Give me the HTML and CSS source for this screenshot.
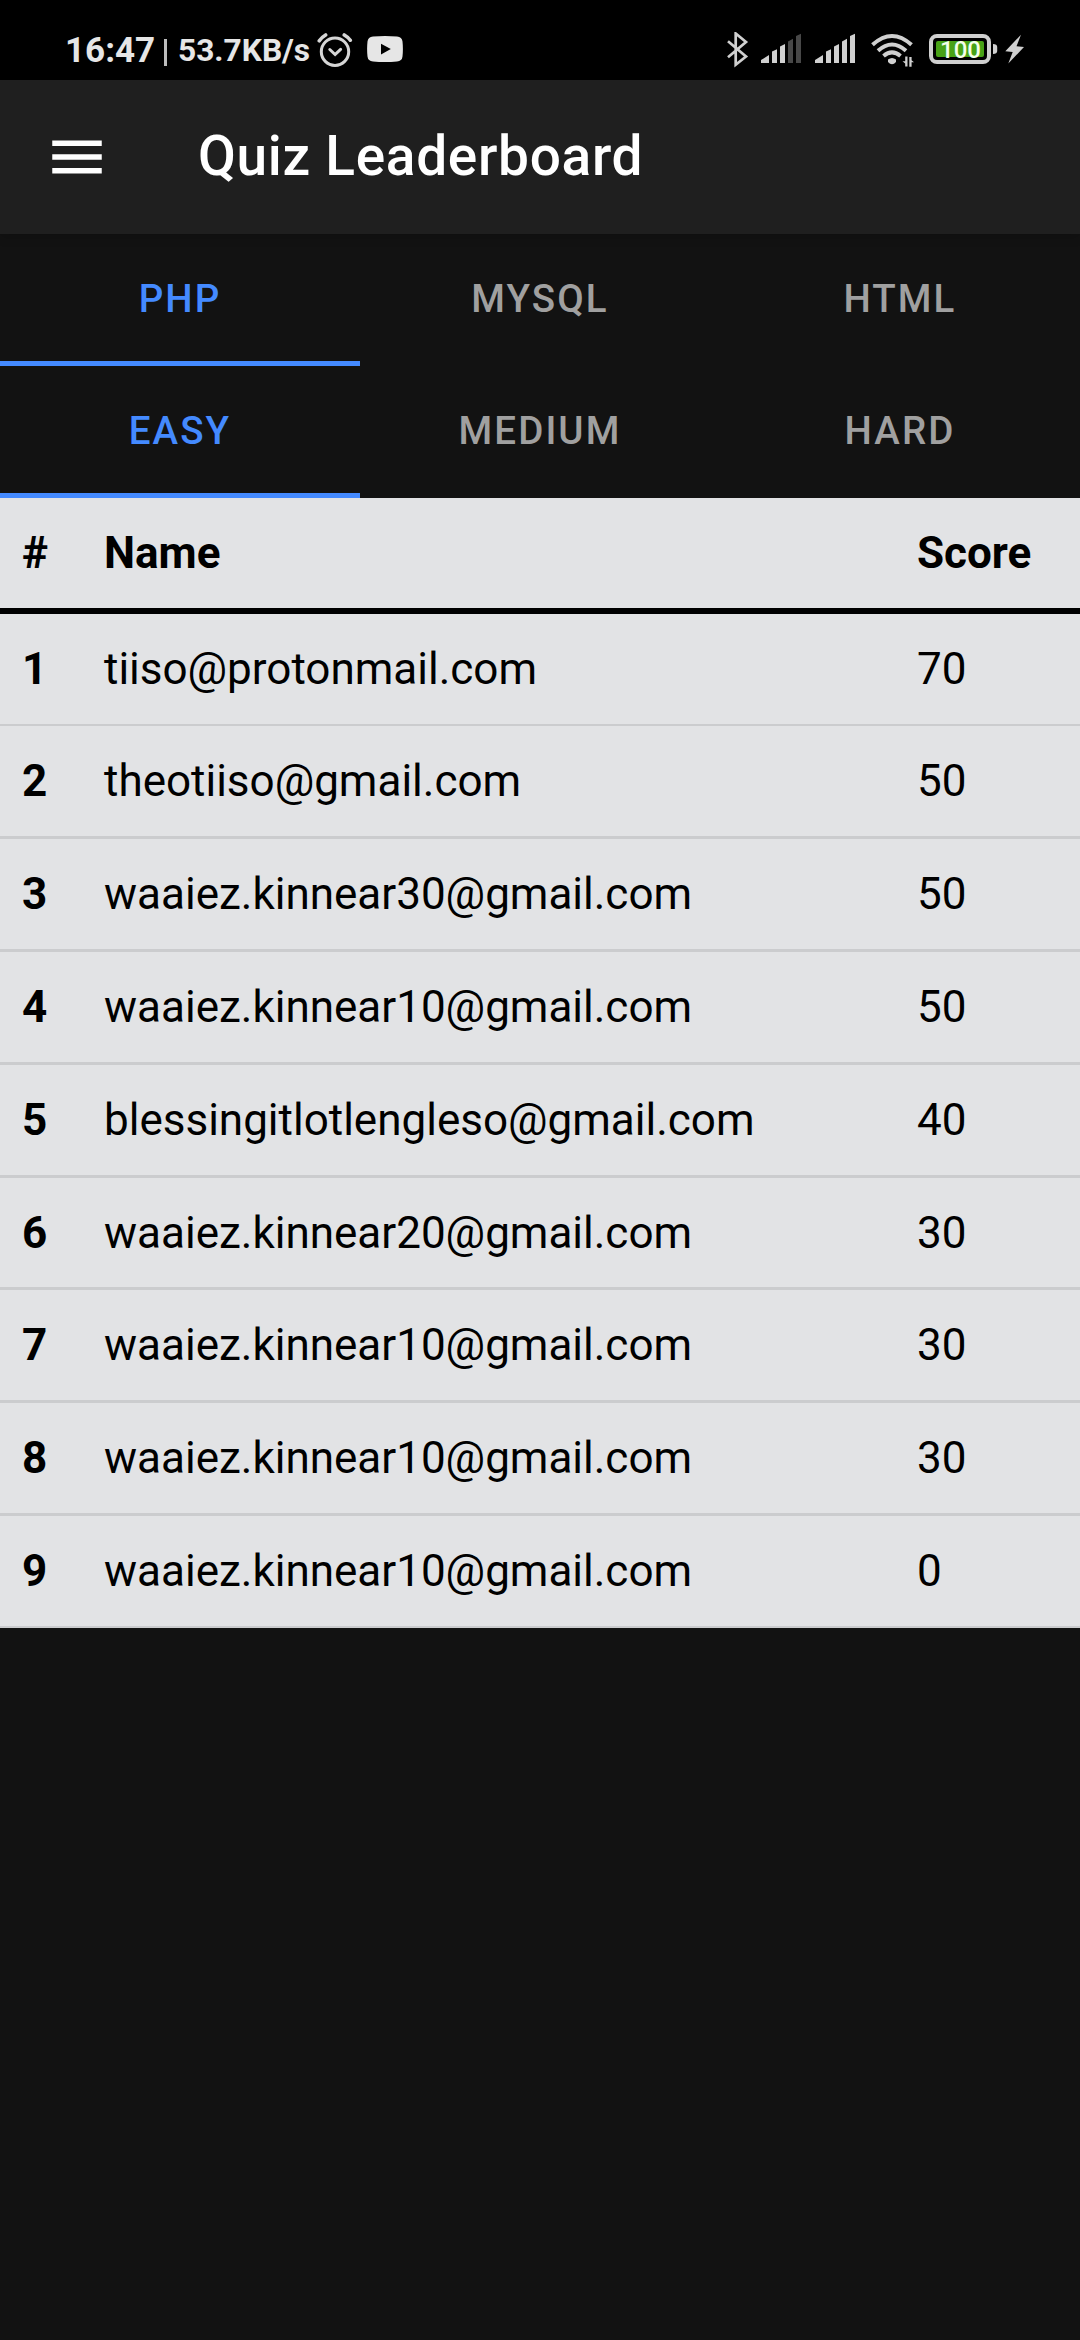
FILE: index.html
```html
<!DOCTYPE html>
<html lang="en">
<head>
<meta charset="utf-8">
<title>Quiz Leaderboard</title>
<link rel="stylesheet" href="styles.css">
</head>
<body>
<div class="status">
  <span class="clock">16:47</span>
  <span class="divider"></span>
  <span class="speed">53.7KB/s</span>
  <svg class="alarm" width="36" height="36" viewBox="317 32 36 36" fill="none" stroke="#d6d6d6" stroke-width="3" stroke-linecap="round">
    <circle cx="335" cy="51.7" r="13.7"/>
    <path d="M329.800 49.500l5.300 5 5.500-5.200"/>
    <path d="M319.300 40.800q2.500-3.600 6.300-5.800M344.300 35q3.800 2.200 6 5.200" stroke-width="3.600"/>
  </svg>
  <svg class="video" width="36" height="26" viewBox="0 0 36 26">
    <path fill="#e6e6e6" fill-rule="evenodd" d="M6 .5Q18-.5 30 .5q5 .3 5.500 5 .8 7.500 0 15-.5 4.700-5.500 5Q18 26.500 6 25.500q-5-.3-5.500-5-.8-7.500 0-15Q1 .8 6 .5zM14 7.800v10.600l9.800-5.300z"/>
  </svg>
  <svg class="phone-state" width="300" height="36" viewBox="726 32 300 36">
    <path d="M728 41.300l18 15.200-10.300 8.300V33.500L746 42l-18 15.200" fill="none" stroke="#d0d0d0" stroke-width="2.700"/>
    <g fill="#d0d0d0">
      <path d="M761 63v-3l8-5v8zM772 63V51.600l5-2.300V63zM780 63V46.500l5-2.500v19z"/>
      <path fill="#484848" d="M788 63V41.500l5-2.800V63zM796 63V36l5-2.300V63z"/>
      <path d="M815 63v-3l8-5v8zM826 63V51.600l5-2.300V63zM834 63V46.500l5-2.500v19zM842 63V41.500l5-2.800V63zM850 63V36l5-2.300V63z"/>
      <path d="M888 59.500q4-3 8 0v2.500q-4 4.500-8 0z"/>
      <path d="M907.500 56.500V66.500h-2.300V63.500l-2.700-2.300h2.700v-4.700zM909.300 57h2.300v3.200l2.400 2h-2.400v4.600h-2.300z"/>
      <path d="M993 44q4.200 0 4.200 3v4q0 3-4.200 3z"/>
      <path d="M1021 34.700L1005.300 51.300l7.400.6-4.400 11.700L1024 47l-7.500-.8z"/>
    </g>
    <g fill="none" stroke="#d0d0d0" stroke-width="4">
      <path d="M872.500 44.800q19.500-17.600 39 0M878 50.700q14-12.400 28 0M883.500 56q8.500-7.200 17 0"/>
      <rect x="931" y="36" width="58" height="26" rx="6"/>
    </g>
    <rect x="936" y="41" width="48" height="16" rx="2" fill="#48a216"/>
    <text class="charge" x="940" y="58">100</text>
  </svg>
</div>
<header class="appbar">
  <svg width="66" height="66" viewBox="0 0 24 24" fill="#fff"><path d="M3 18h18v-2H3v2zm0-5h18v-2H3v2zm0-7v2h18V6H3z"/></svg>
  <h1 class="title">Quiz Leaderboard</h1>
</header>
<nav class="tabs">
  <div class="tab active">PHP</div><div class="tab">MYSQL</div><div class="tab">HTML</div>
</nav>
<nav class="tabs">
  <div class="tab active">EASY</div><div class="tab">MEDIUM</div><div class="tab">HARD</div>
</nav>
<main class="board">
  <div class="row head"><span>#</span><span>Name</span><span>Score</span></div>
  <div class="row first"><b>1</b><span>tiiso@protonmail.com</span><span>70</span></div>
  <div class="row"><b>2</b><span>theotiiso@gmail.com</span><span>50</span></div>
  <div class="row"><b>3</b><span>waaiez.kinnear30@gmail.com</span><span>50</span></div>
  <div class="row"><b>4</b><span>waaiez.kinnear10@gmail.com</span><span>50</span></div>
  <div class="row"><b>5</b><span>blessingitlotlengleso@gmail.com</span><span>40</span></div>
  <div class="row"><b>6</b><span>waaiez.kinnear20@gmail.com</span><span>30</span></div>
  <div class="row"><b>7</b><span>waaiez.kinnear10@gmail.com</span><span>30</span></div>
  <div class="row"><b>8</b><span>waaiez.kinnear10@gmail.com</span><span>30</span></div>
  <div class="row last"><b>9</b><span>waaiez.kinnear10@gmail.com</span><span>0</span></div>
</main>
</body>
</html>
```
FILE: styles.css
```css
* { box-sizing: border-box; }
body {
  margin: 0;
  min-height: 2340px;
  background: #121212;
  font-family: Roboto, sans-serif;
}
svg { display: block; flex: none; }

.status {
  display: flex;
  align-items: flex-start;
  height: 80px;
  padding: 32px 54px 0 65px;
  background: #000;
  color: #e6e6e6;
  font-weight: 700;
  white-space: nowrap;
}
.clock { width: 99px; font-size: 35px; line-height: 37px; }
.divider { width: 3px; height: 27px; margin-top: 7px; background: #bdbdbd; }
.speed { width: 139px; padding-left: 11px; font-size: 31.7px; line-height: 38px; }
.alarm { margin-left: 11px; }
.video { margin: 4px 0 0 14px; }
.phone-state { margin-left: auto; }
.charge { font-size: 24px; font-weight: 500; fill: #f4ffe9; }

.appbar {
  display: flex;
  align-items: center;
  gap: 88px;
  height: 154px;
  padding: 0 44px;
  background: #1f1f1f;
  box-shadow: 0 2px 11px rgba(0, 0, 0, 0.2);
}
.title {
  margin: 0;
  padding-bottom: 2px;
  color: #fff;
  font-size: 55px;
  font-weight: 500;
  line-height: 88px;
  letter-spacing: 0.0125em;
}

.tabs { display: grid; grid-template-columns: repeat(3, 1fr); height: 132px; }
.tab {
  display: flex;
  align-items: center;
  justify-content: center;
  padding-top: 1px;
  border-bottom: 5px solid transparent;
  color: #a0a0a0;
  font-size: 38.5px;
  font-weight: 500;
  letter-spacing: 0.054em;
}
.tab.active { border-color: #448aff; color: #448aff; }

.board { background: #e2e3e5; color: #000; font-size: 44px; line-height: 66px; }
.row {
  display: grid;
  grid-template-columns: 82px 813px auto;
  height: 112.9px;
  padding: 22px 22px 0;
  border-bottom: 3px solid #cbccce;
}
.row.head { height: 116px; border-bottom: 6px solid #000; font-weight: 700; }
.row.first { height: 112px; border-bottom-width: 2px; }
.row.last { height: 111.7px; border-bottom-width: 2px; }
```
